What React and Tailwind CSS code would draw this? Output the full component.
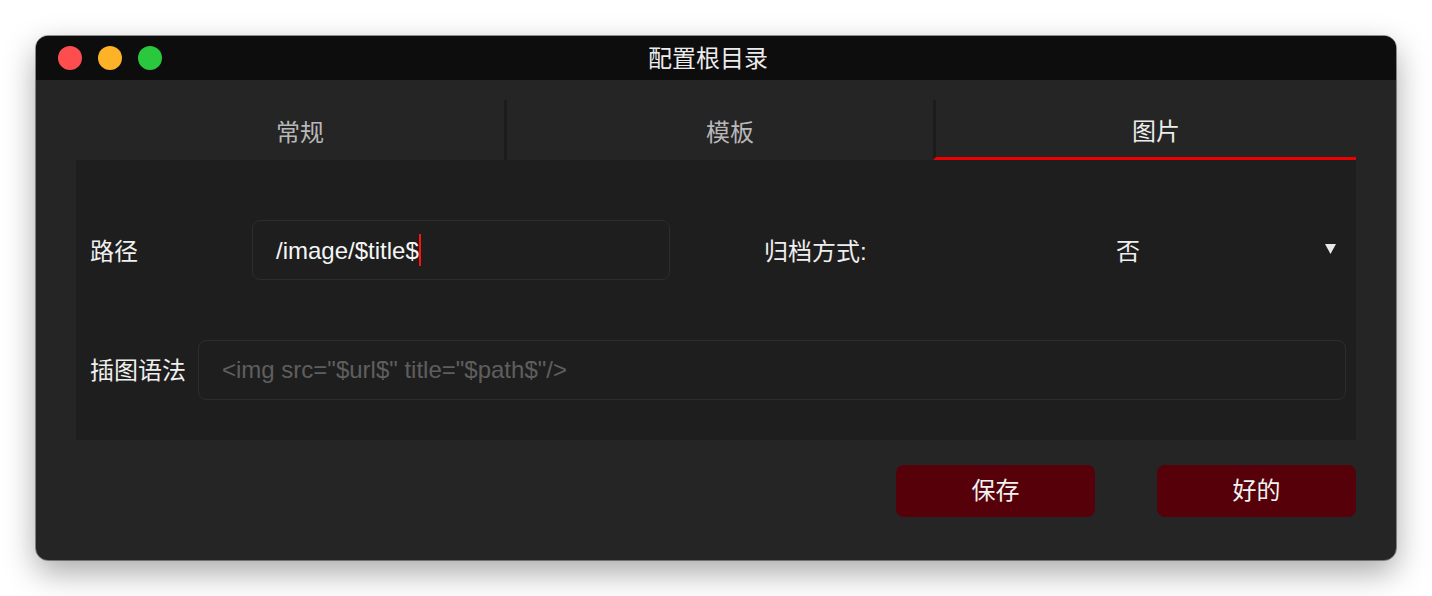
import React from 'react';

const font = "font-['Liberation_Sans','Noto_Sans_CJK_SC',sans-serif]";

export default function App() {
  return (
    <div className={`w-[1432px] h-[596px] bg-white pt-[36px] pl-[36px] ${font}`}>
      {/* Window */}
      <div className="w-[1360px] h-[524px] rounded-[12px] overflow-hidden bg-[#252525] shadow-[0_12px_32px_rgba(0,0,0,0.35)] outline outline-1 outline-black/40">
        {/* Title bar */}
        <div className="h-[44px] bg-[#0d0d0d] grid grid-cols-[1fr_auto_1fr] items-center pl-[22px] pr-[38px]">
          <div className="flex items-center gap-[16px]">
            <span className="w-[24px] h-[24px] rounded-full bg-[#fe4d4f]" />
            <span className="w-[24px] h-[24px] rounded-full bg-[#feb228]" />
            <span className="w-[24px] h-[24px] rounded-full bg-[#2ac83d]" />
          </div>
          <div className="text-[24px] text-[#ececec] leading-none pt-[2px]">配置根目录</div>
          <div />
        </div>

        <div className="px-[40px] pt-[20px]">
          {/* Tabs */}
          <div className="grid grid-cols-[428px_429px_1fr] h-[60px]">
            <div className="flex items-center justify-center text-[24px] text-[#b8b8b8] pt-[6px] pl-[20px]">常规</div>
            <div className="flex items-center justify-center text-[24px] text-[#b8b8b8] pt-[6px] pl-[20px] border-l-[3px] border-[#1c1c1c]">模板</div>
            <div className="flex items-center justify-center text-[24px] text-[#ececec] pt-[6px] pl-[20px] border-l-[3px] border-[#1c1c1c] border-b-[3px] border-b-[#ee0000]">图片</div>
          </div>

          {/* Panel */}
          <div className="h-[280px] bg-[#1e1e1e] pt-[60px] pl-[14px] pr-[10px]">
            <div className="flex items-center h-[60px]">
              <div className="w-[162px] text-[24px] text-[#efefef] pt-[3px]">路径</div>
              <div className="w-[418px] h-[60px] rounded-[8px] border border-[#2d2d2d] flex items-center pl-[23px] text-[24px] text-[#f5f5f5]">
                <span className="pt-[2px]">/image/$title$</span>
                <span className="w-[2px] h-[32px] bg-[#ff1010]" />
              </div>
              <div className="ml-[94px] w-[146px] text-[24px] text-[#efefef] pt-[3px]">归档方式:</div>
              <div className="flex-1 h-[60px] flex items-center relative">
                <div className="flex-1 text-center text-[24px] text-[#efefef] pt-[3px]">否</div>
                <svg className="absolute right-[10px] top-[24px]" width="11" height="10" viewBox="0 0 11 10">
                  <polygon points="0,0 11,0 5.5,10" fill="#e8e8e8" />
                </svg>
              </div>
            </div>

            <div className="flex items-center h-[60px] mt-[60px] gap-[12px]">
              <div className="text-[24px] text-[#efefef] whitespace-nowrap pt-[2px]">插图语法</div>
              <div className="flex-1 h-[60px] rounded-[8px] border border-[#2d2d2d] flex items-center pl-[23px] text-[24px] text-[#5e5e5e]">
                &lt;img src="$url$" title="$path$"/&gt;
              </div>
            </div>
          </div>

          {/* Buttons */}
          <div className="flex justify-end gap-[62px] mt-[25px]">
            <button className="w-[199px] h-[52px] rounded-[8px] bg-[#56000a] text-[24px] text-[#f2f2f2]">保存</button>
            <button className="w-[199px] h-[52px] rounded-[8px] bg-[#56000a] text-[24px] text-[#f2f2f2]">好的</button>
          </div>
        </div>
      </div>
    </div>
  );
}
